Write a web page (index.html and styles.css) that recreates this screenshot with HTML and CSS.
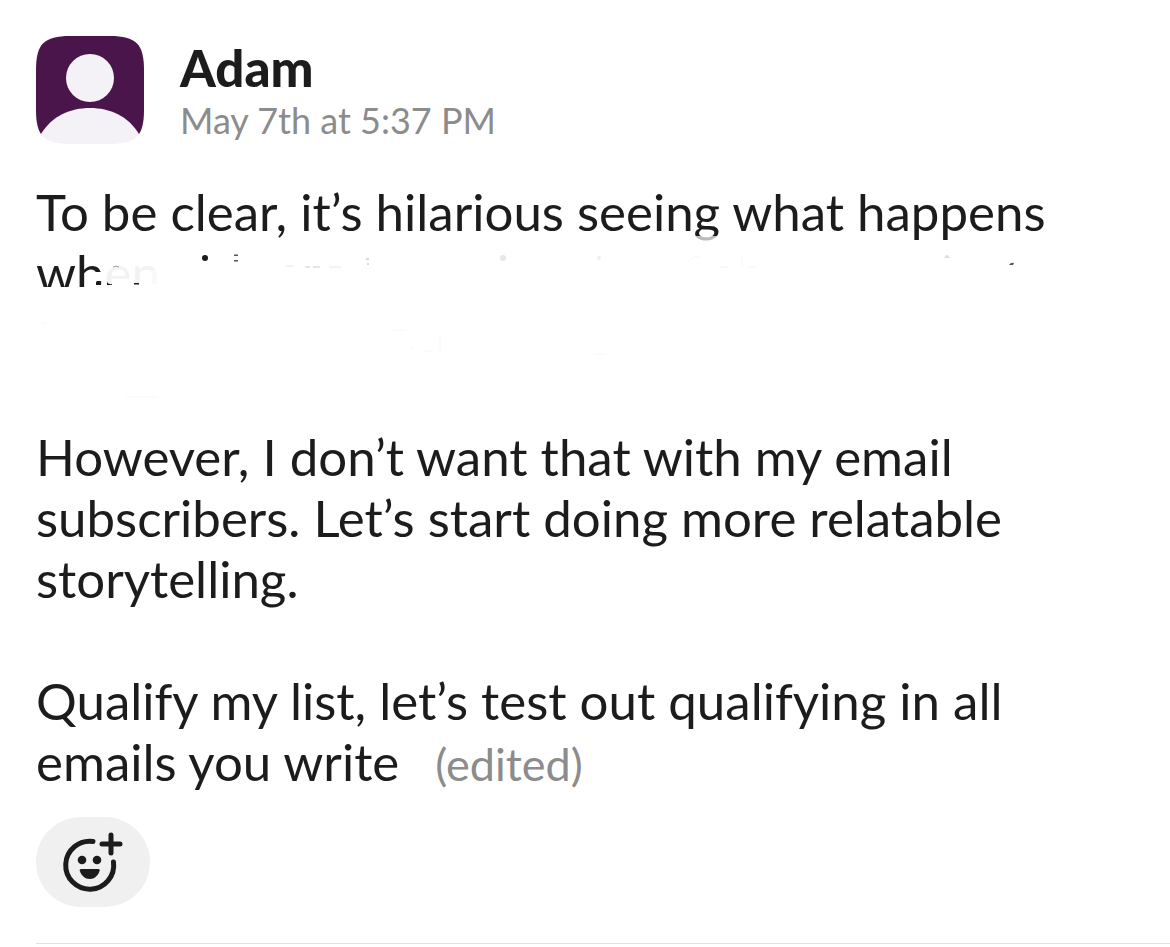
FILE: index.html
```html
<!DOCTYPE html>
<html lang="en">
<head>
<meta charset="utf-8">
<meta name="viewport" content="width=device-width, initial-scale=1">
<title>Message from Adam</title>
<link rel="stylesheet" href="styles.css">
</head>
<body>
<article class="message">
  <header class="message-header">
    <svg class="avatar" viewBox="0 0 108 108" aria-hidden="true">
      <defs>
        <clipPath id="avatar-shape"><path d="M0 34C0 8 8 0 34 0H74C100 0 108 8 108 34V74C108 100 100 108 74 108H34C8 108 0 100 0 74Z"/></clipPath>
      </defs>
      <g clip-path="url(#avatar-shape)">
        <rect width="108" height="98" fill="#4a154b"/>
        <circle cx="54" cy="42" r="24" fill="#f4f2f6"/>
        <path d="M5 98C16 80 34 72 54 72S92 80 103 98L108 108H0Z" fill="#f4f2f6"/>
      </g>
    </svg>
    <div class="byline">
      <h1 class="author">Adam</h1>
      <time class="timestamp">May 7th at 5:37 PM</time>
    </div>
  </header>

  <div class="message-body">
    <p class="paragraph erased">To be clear, it’s hilarious seeing what happens wh<span class="faint">en</span>
      <svg class="smudges" width="1098" height="244" viewBox="36 181 1098 244" aria-hidden="true">
        <g fill="#fff">
          <rect x="36" y="287" width="126" height="13"/>
          <path d="M95 272H102V281H95Z"/>
          <rect x="94" y="284" width="70" height="10"/>
          <path d="M692 236H724V246H692Z" opacity=".7"/>
          <path d="M140 270H162V290H140Z" opacity=".5"/>
        </g>
        <g fill="#1d1c1d">
          <circle cx="205" cy="258" r="3"/>
          <path d="M234 254.500h4v1.500h-4zM234 260h4v1.500h-4z" opacity=".75"/>
          <path d="M96 282h5v3h-5zM107 282q2 3 5 2v1h-5zM134 283h5v1.500h-5z"/>
          <path d="M1009 265q2-3 5-2l-1 2z" opacity=".75"/>
        </g>
        <g fill="none" stroke="#1d1c1d" stroke-width="1">
          <path d="M113 267q3-2 6 0" opacity=".4"/>
          <path d="M305 267h5M313 267h7" opacity=".22"/>
          <path d="M285 266h9M329 267h12" opacity=".1"/>
          <path d="M366 259h3M367 264h2" opacity=".35"/>
          <path d="M688 262l4-4M692 257h8M720 267h8M742 256v10M749 267h8M774 264h5" opacity=".04"/>
          <path d="M392 330h14M412 346v4M425 351h8M440 337v14M126 397h32M594 354h12M42 323h5" opacity=".03"/>
        </g>
        <g fill="#1d1c1d">
          <circle cx="503" cy="258" r="3" opacity=".1"/>
          <circle cx="599" cy="258" r="2" opacity=".08"/>
          <path d="M944 258q3-6 6 0z" opacity=".14"/>
        </g>
      </svg>
    </p>
    <p class="paragraph">However, I don’t want that with my email subscribers. Let’s start doing more relatable storytelling.</p>
    <p class="paragraph">Qualify my list, let’s test out qualifying in all emails you write <span class="edited">(edited)</span></p>
  </div>

  <button class="add-reaction" type="button" aria-label="Add reaction">
    <svg class="reaction-icon" viewBox="0 0 62 62" aria-hidden="true">
      <g fill="none" stroke="#1d1c1d" stroke-width="5" stroke-linecap="round">
        <path d="M31 10.400A24 24 0 1 0 51.500 31"/>
        <path d="M49 4V22M40 13H58"/>
      </g>
      <g fill="#1d1c1d">
        <circle cx="20" cy="29" r="4.300"/>
        <circle cx="35" cy="29" r="4.300"/>
        <path d="M19 38H36.500Q38 38 37.700 39.500C36 45 32.500 48 27.700 48S19.500 45 17.700 39.500Q17.500 38 19 38Z"/>
      </g>
    </svg>
  </button>
</article>
</body>
</html>
```
FILE: styles.css
```css
body {
  margin: 0;
  background: #fff;
  color: #1d1c1d;
  font-family: Lato, "Liberation Sans", sans-serif;
}

.message {
  display: flex;
  flex-direction: column;
  padding: 36px 0 0 36px;
}

.message-header {
  display: flex;
  align-items: center;
  gap: 36px;
}

.avatar {
  width: 108px;
  height: 108px;
  flex: none;
}

.byline {
  display: flex;
  flex-direction: column;
}

.author {
  margin: 0;
  font-size: 51px;
  line-height: 60px;
  font-weight: 900;
}

.timestamp {
  color: #8c8c8c;
  font-size: 36px;
  line-height: 44px;
}

.message-body {
  display: flex;
  flex-direction: column;
  gap: 61px;
  padding: 37px 36px 25px 0;
}

.paragraph {
  margin: 0;
  font-size: 51px;
  line-height: 61px;
}

.erased {
  position: relative;
  min-height: 184px;
}

.faint {
  color: #f2f2f2;
}

.smudges {
  position: absolute;
  top: 0;
  left: 0;
}

.edited {
  margin-left: 23px;
  color: #8c8c8c;
  font-size: 45px;
  line-height: 1;
}

.add-reaction {
  display: flex;
  align-items: center;
  justify-content: center;
  width: 114px;
  height: 90px;
  margin-bottom: 36px;
  padding: 0;
  border: 0;
  border-radius: 45px;
  background: #f0f0f0;
}

.reaction-icon {
  width: 62px;
  height: 62px;
}

.message::after {
  content: "";
  border-top: 1px solid #e2e2e2;
}
```
